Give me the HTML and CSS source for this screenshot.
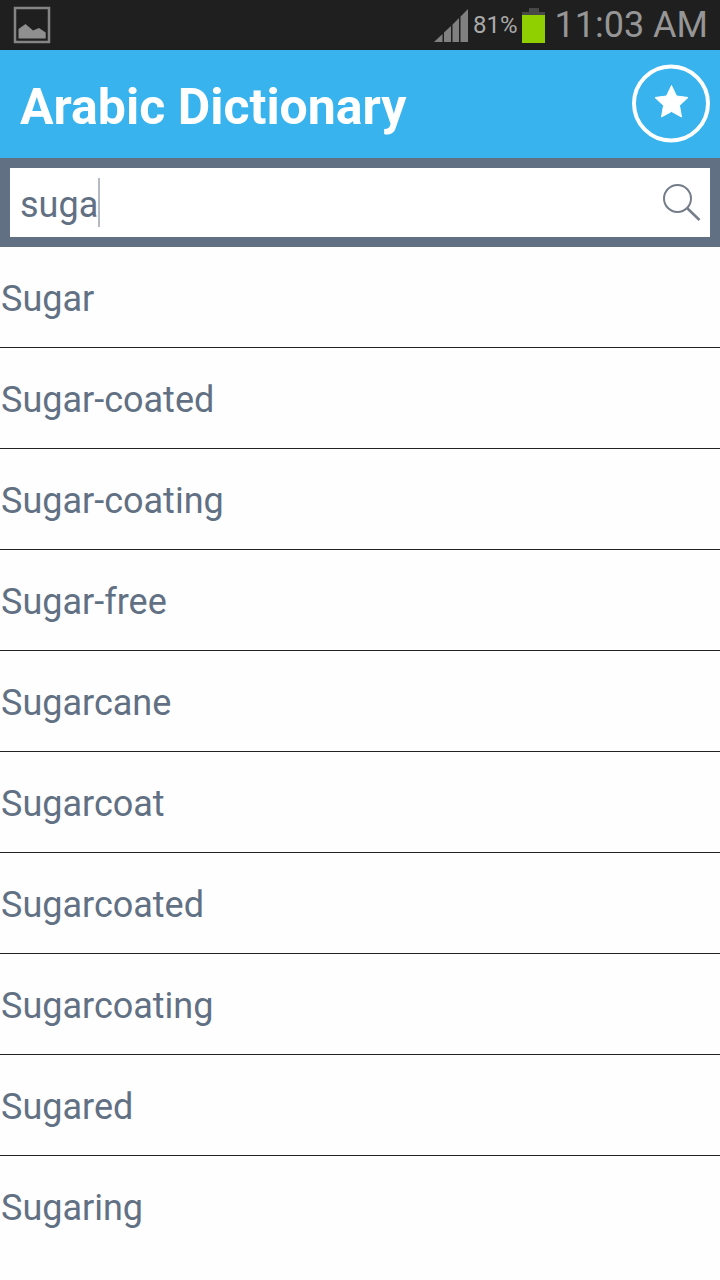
FILE: index.html
```html
<!DOCTYPE html>
<html lang="en">
<head>
<meta charset="utf-8">
<meta name="viewport" content="width=device-width, initial-scale=1">
<title>Arabic Dictionary</title>
<link rel="stylesheet" href="styles.css">
</head>
<body>
<div class="status-bar">
  <svg class="picture-icon" viewBox="0 0 38 38" aria-hidden="true">
    <rect x="2" y="2" width="34" height="34" fill="none" stroke="#858585" stroke-width="2.500"/>
    <path d="M5.500 32.500V23L12.500 18L20 24.500L26 22L32.700 26.500V32.500Z" fill="#8f8f8f"/>
  </svg>
  <svg class="signal-icon" viewBox="0 0 34 33" aria-hidden="true">
    <path d="M0 33L8.500 25V33ZM10 33V23.500L17 17V33ZM18.500 33V15.500L25 9V33ZM26.500 33V7.500L34 0V33Z" fill="#808080"/>
  </svg>
  <span class="battery-level">81%</span>
  <svg class="battery-icon" viewBox="0 0 23 35" aria-hidden="true">
    <path d="M7 0H17V4H23V7H0V4H7Z" fill="#484848"/>
    <rect y="7" width="23" height="28" fill="#91d000"/>
  </svg>
  <span class="clock">11:03 AM</span>
</div>
<header class="app-bar">
  <h1 class="app-title">Arabic Dictionary</h1>
  <button class="favorites" type="button" aria-label="Favorites">
    <svg class="favorites-icon" viewBox="0 0 80 80" aria-hidden="true">
      <circle cx="40" cy="39.500" r="37" fill="none" stroke="#fff" stroke-width="4"/>
      <path d="M40.500 21.500L45.500 32L57 33.500L48.500 41.500L50.500 53L40.500 47.500L30.500 53L32.500 41.500L24 33.500L35.500 32Z" fill="#fff" stroke="#fff" stroke-linejoin="round"/>
    </svg>
  </button>
</header>
<main>
  <form class="search">
    <div class="search-box">
      <label class="search-field">
        <input class="search-input" type="text" value="suga" aria-label="Search word" autocomplete="off" spellcheck="false">
        <span class="caret"></span>
      </label>
      <button class="search-button" type="button" aria-label="Search">
        <svg class="search-icon" viewBox="0 0 40 40" fill="none" stroke="#757d89" stroke-width="2" aria-hidden="true">
          <circle cx="16.500" cy="15.500" r="13.500"/>
          <path d="M26 25L38.500 37" stroke-width="2.500"/>
        </svg>
      </button>
    </div>
  </form>
  <ul class="words">
    <li class="word">Sugar</li>
    <li class="word">Sugar-coated</li>
    <li class="word">Sugar-coating</li>
    <li class="word">Sugar-free</li>
    <li class="word">Sugarcane</li>
    <li class="word">Sugarcoat</li>
    <li class="word">Sugarcoated</li>
    <li class="word">Sugarcoating</li>
    <li class="word">Sugared</li>
    <li class="word">Sugaring</li>
  </ul>
</main>
</body>
</html>
```
FILE: styles.css
```css
* {
  box-sizing: border-box;
}

body {
  margin: 0;
  background: #fefefe;
  color: #617083;
  font-family: Roboto, "Liberation Sans", sans-serif;
  font-size: 36px;
}

svg {
  display: block;
}

button {
  padding: 0;
  border: 0;
  background: none;
}

.status-bar {
  display: flex;
  align-items: center;
  height: 50px;
  padding: 0 12px;
  background: #1f1f1f;
  color: #969696;
}

.picture-icon {
  width: 38px;
  height: 38px;
  margin-right: auto;
  margin-left: 1px;
}

.signal-icon {
  width: 34px;
  height: 33px;
  margin-right: 5px;
}

.battery-level {
  margin-right: 4px;
  font-size: 24px;
  color: #aaa;
}

.battery-icon {
  width: 23px;
  height: 35px;
  margin-right: 10px;
}

.clock {
  font-size: 36px;
}

.app-bar {
  display: flex;
  align-items: center;
  justify-content: space-between;
  height: 108px;
  padding: 0 9px 0 20px;
  background: #38b3ed;
}

.app-title {
  margin: 0;
  padding-top: 6px;
  color: #fff;
  font-size: 50px;
  font-weight: 700;
  line-height: 60px;
}

.favorites-icon {
  width: 80px;
  height: 80px;
}

.search {
  padding: 10px;
  background: #617083;
}

.search-box {
  display: flex;
  align-items: center;
  height: 69px;
  padding: 0 9px 0 10px;
  background: #fff;
}

.search-field {
  display: flex;
  flex: 1;
  align-items: center;
  min-width: 0;
}

.search-input {
  field-sizing: content;
  min-width: 0;
  padding: 4px 0 0;
  border: 0;
  outline: 0;
  background: none;
  color: inherit;
  font: inherit;
}

.caret {
  width: 2px;
  height: 49px;
  background: #b5b9c1;
}

.search-icon {
  width: 40px;
  height: 40px;
}

.words {
  margin: 0;
  padding: 0;
  list-style: none;
}

.word {
  padding: 31px 1px 27px;
  line-height: 42px;
}

.word + .word {
  border-top: 1px solid #222;
}
```
